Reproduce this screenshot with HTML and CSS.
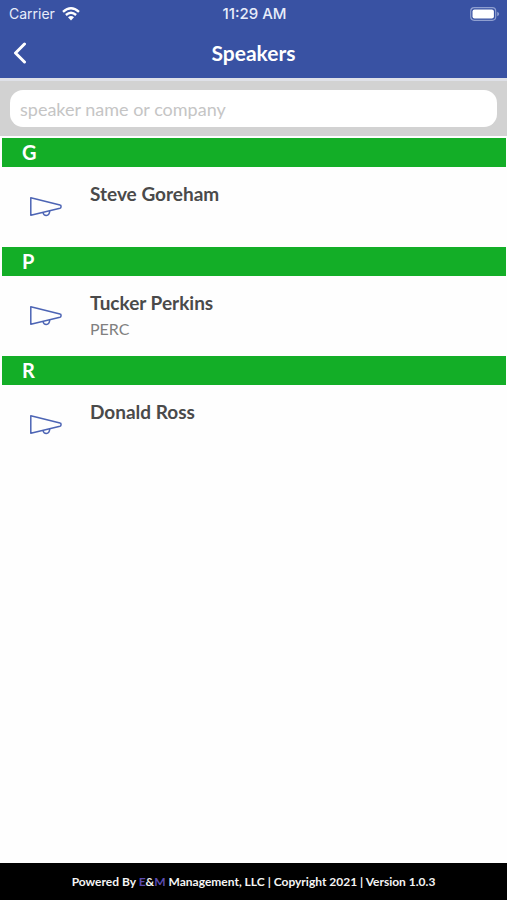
FILE: index.html
```html
<!DOCTYPE html>
<html lang="en">
<head>
<meta charset="utf-8">
<meta name="viewport" content="width=device-width, initial-scale=1">
<title>Speakers</title>
<link rel="stylesheet" href="styles.css">
</head>
<body>
<svg class="defs" aria-hidden="true">
  <symbol id="megaphone" viewBox="0 0 34 22">
    <path d="M1.8 1.8V19.2L31 12.2Q32 11.9 32 11V10Q32 9.200 31 9Z"/>
    <path d="M14 16.500Q14.500 19.500 17.300 19.500Q20.500 19.300 20.700 15"/>
  </symbol>
</svg>
<header class="top">
  <div class="status">
    <div class="carrier">
      <span>Carrier</span>
      <svg class="wifi" viewBox="0 0 18 14" aria-hidden="true">
        <path class="arc" d="M1 4.800Q9-2.200 17 4.800M3.900 8Q9 3.500 14.100 8"/>
        <path class="dot" d="M9 13.500L6 10.300Q9 7.900 12 10.300Z"/>
      </svg>
    </div>
    <span class="clock">11:29 AM</span>
    <svg class="battery" viewBox="0 0 30 14" aria-hidden="true">
      <rect class="case" x=".7" y=".7" width="25" height="12.600" rx="3.500"/>
      <rect class="charge" x="2.500" y="2.500" width="21.400" height="9" rx="2"/>
      <path class="tip" d="M27.200 4.800Q29.200 5.500 29.200 7T27.200 9.200Z"/>
    </svg>
  </div>
  <nav class="nav">
    <button class="back" type="button" aria-label="Back">
      <svg viewBox="0 0 14 22" aria-hidden="true"><path d="M11.500 2L2.500 11L11.500 20"/></svg>
    </button>
    <h1>Speakers</h1>
  </nav>
</header>
<form class="search">
  <input type="text" aria-label="Search speakers" placeholder="speaker name or company">
</form>
<main>
  <section>
    <h2>G</h2>
    <a class="speaker" href="#steve-goreham">
      <svg class="icon" aria-hidden="true"><use href="#megaphone"/></svg>
      <div class="info"><h3>Steve Goreham</h3></div>
    </a>
  </section>
  <section>
    <h2>P</h2>
    <a class="speaker" href="#tucker-perkins">
      <svg class="icon" aria-hidden="true"><use href="#megaphone"/></svg>
      <div class="info"><h3>Tucker Perkins</h3><p>PERC</p></div>
    </a>
  </section>
  <section>
    <h2>R</h2>
    <a class="speaker" href="#donald-ross">
      <svg class="icon" aria-hidden="true"><use href="#megaphone"/></svg>
      <div class="info"><h3>Donald Ross</h3></div>
    </a>
  </section>
</main>
<footer>Powered By <span class="brand">E</span>&amp;<span class="brand">M</span> Management, LLC | Copyright 2021 | Version 1.0.3</footer>
</body>
</html>
```
FILE: styles.css
```css
* { box-sizing: border-box; }
body {
  margin: 0;
  min-height: 100vh;
  display: flex;
  flex-direction: column;
  background: #fefefe;
  font-family: Lato, sans-serif;
}
h1, h2, h3, p { margin: 0; }
.defs { display: none; }
.top { background: #3952a3; color: #fff; }
.status {
  display: grid;
  grid-template-columns: 1fr auto 1fr;
  align-items: center;
  height: 28px;
  padding: 0 7px 0 9px;
  font: 14px/20px Inter, sans-serif;
  color: #e8edfa;
}
.carrier { display: flex; align-items: center; gap: 7px; }
.wifi { width: 18px; height: 14px; }
.arc { fill: none; stroke: #fff; stroke-width: 2.4; }
.dot { fill: #fff; }
.clock { font-size: 15px; font-weight: 500; }
.battery { width: 30px; height: 14px; justify-self: end; }
.case { fill: none; stroke: #8f9fd0; stroke-width: 1.2; }
.charge { fill: #fff; }
.tip { fill: #8f9fd0; }
.nav {
  display: grid;
  grid-template-columns: 40px 1fr 40px;
  align-items: center;
  height: 50px;
}
.nav h1 { font-size: 21px; line-height: 28px; font-weight: 700; text-align: center; }
.back { display: flex; justify-content: center; padding: 0; border: 0; background: none; }
.back svg { width: 14px; height: 22px; fill: none; stroke: #fff; stroke-width: 3; stroke-linecap: round; stroke-linejoin: round; }
.search {
  padding: 9px 10px;
  background: #d2d2d2;
  border-top: 3px solid #dfe1e8;
}
.search input {
  display: block;
  width: 100%;
  height: 37px;
  padding: 0 10px;
  border: 0;
  border-radius: 13px;
  background: #fff;
  color: #444;
  font: 18px/24px Lato, sans-serif;
}
.search input::placeholder { color: #c5c5c5; opacity: 1; }
main { flex: 1; padding: 2px 1px 0 2px; }
h2 {
  height: 29px;
  padding-left: 20px;
  background: #13ae27;
  color: #fff;
  font-size: 20px;
  line-height: 29px;
  font-weight: 700;
}
.speaker {
  display: flex;
  height: 80px;
  padding: 15px 16px 0 27px;
  gap: 27px;
  color: #4a4a4a;
  text-decoration: none;
}
.icon {
  width: 34px;
  height: 22px;
  margin-top: 14px;
  fill: none;
  stroke: #4c64b4;
  stroke-width: 1.5;
  stroke-linejoin: round;
}
h3 { font-size: 19px; line-height: 24px; font-weight: 700; }
.info p { padding-top: 4px; font-size: 16px; line-height: 20px; color: #808080; }
footer {
  height: 37px;
  background: #000;
  color: #f4f4f4;
  font-size: 12px;
  line-height: 37px;
  font-weight: 700;
  text-align: center;
}
.brand { color: #5b4bb0; }
```
